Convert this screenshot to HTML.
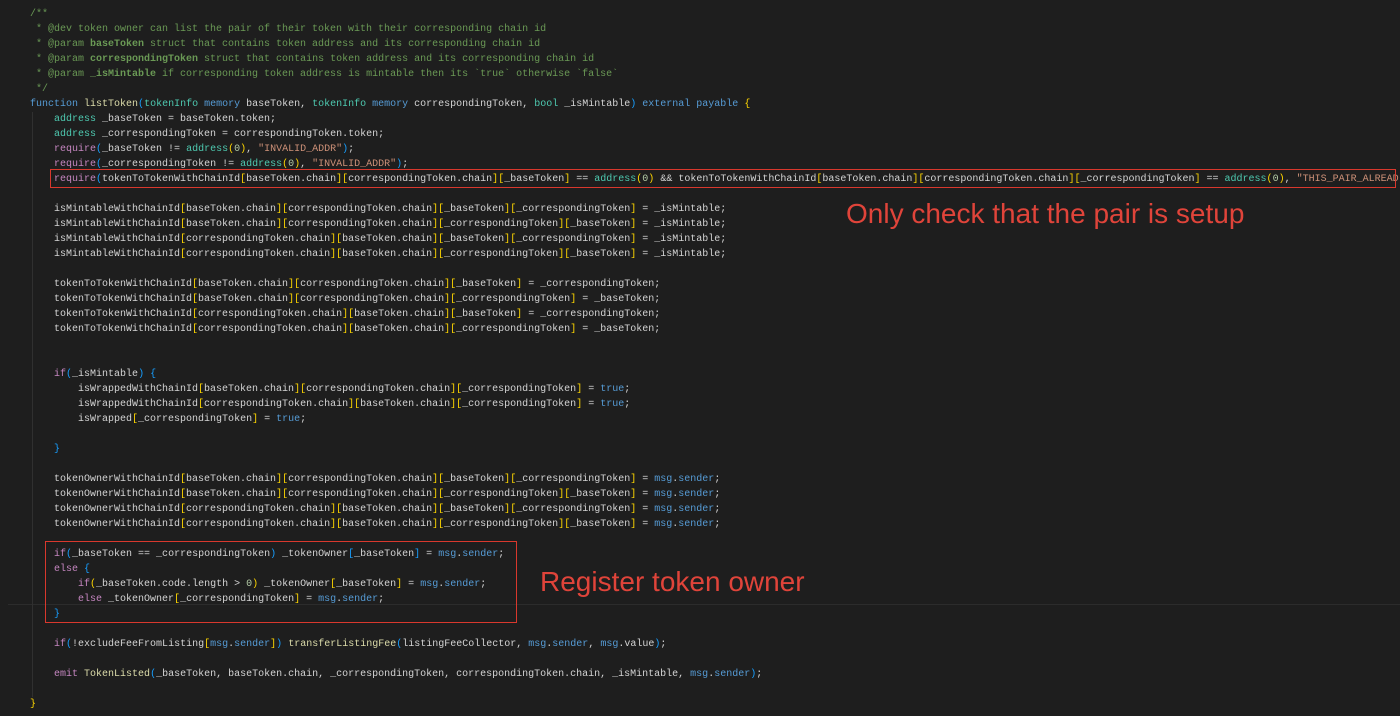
<!DOCTYPE html>
<html><head><meta charset="utf-8"><style>
html,body{margin:0;padding:0;background:#1e1e1e;width:1400px;height:716px;overflow:hidden;position:relative}
pre{position:absolute;left:30px;top:7px;margin:0;font:10px/15px "Liberation Mono",monospace;color:#d4d4d4;white-space:pre}
.c{color:#6a9955}.k{color:#569cd6}.f{color:#dcdcaa}.t{color:#4ec9b0}.s{color:#ce9178}.n{color:#b5cea8}.p{color:#c586c0}.v{color:#9cdcfe}.y{color:#ffd700}.m{color:#da70d6}.b{color:#179fff}
.box{position:absolute;border:1.5px solid #d9382d}
.ann{position:absolute;font-family:"Liberation Sans",sans-serif;color:#e0443a;font-size:28px;line-height:32px}
.hl{position:absolute;left:8px;right:0;top:604px;height:1px;background:#2c2c2c}
.g{position:absolute;width:1px;background:#303030}
</style></head><body>
<div class="hl"></div>
<div class="g" style="left:32px;top:112px;height:585px"></div>
<pre><span class="c">/**
 * @dev token owner can list the pair of their token with their corresponding chain id
 * @param <b>baseToken</b> struct that contains token address and its corresponding chain id
 * @param <b>correspondingToken</b> struct that contains token address and its corresponding chain id
 * @param <b>_isMintable</b> if corresponding token address is mintable then its `true` otherwise `false`
 */</span>
<span class="k">function</span> <span class="f">listToken</span><span class="b">(</span><span class="t">tokenInfo</span> <span class="k">memory</span> baseToken, <span class="t">tokenInfo</span> <span class="k">memory</span> correspondingToken, <span class="t">bool</span> _isMintable<span class="b">)</span> <span class="k">external</span> <span class="k">payable</span> <span class="y">{</span>
    <span class="t">address</span> _baseToken = baseToken.token;
    <span class="t">address</span> _correspondingToken = correspondingToken.token;
    <span class="p">require</span><span class="b">(</span>_baseToken != <span class="t">address</span><span class="y">(</span><span class="n">0</span><span class="y">)</span>, <span class="s">"INVALID_ADDR"</span><span class="b">)</span>;
    <span class="p">require</span><span class="b">(</span>_correspondingToken != <span class="t">address</span><span class="y">(</span><span class="n">0</span><span class="y">)</span>, <span class="s">"INVALID_ADDR"</span><span class="b">)</span>;
    <span class="p">require</span><span class="b">(</span>tokenToTokenWithChainId<span class="y">[</span>baseToken.chain<span class="y">]</span><span class="y">[</span>correspondingToken.chain<span class="y">]</span><span class="y">[</span>_baseToken<span class="y">]</span> == <span class="t">address</span><span class="y">(</span><span class="n">0</span><span class="y">)</span> &amp;&amp; tokenToTokenWithChainId<span class="y">[</span>baseToken.chain<span class="y">]</span><span class="y">[</span>correspondingToken.chain<span class="y">]</span><span class="y">[</span>_correspondingToken<span class="y">]</span> == <span class="t">address</span><span class="y">(</span><span class="n">0</span><span class="y">)</span>, <span class="s">"THIS_PAIR_ALREAD</span>

    isMintableWithChainId<span class="y">[</span>baseToken.chain<span class="y">]</span><span class="y">[</span>correspondingToken.chain<span class="y">]</span><span class="y">[</span>_baseToken<span class="y">]</span><span class="y">[</span>_correspondingToken<span class="y">]</span> = _isMintable;
    isMintableWithChainId<span class="y">[</span>baseToken.chain<span class="y">]</span><span class="y">[</span>correspondingToken.chain<span class="y">]</span><span class="y">[</span>_correspondingToken<span class="y">]</span><span class="y">[</span>_baseToken<span class="y">]</span> = _isMintable;
    isMintableWithChainId<span class="y">[</span>correspondingToken.chain<span class="y">]</span><span class="y">[</span>baseToken.chain<span class="y">]</span><span class="y">[</span>_baseToken<span class="y">]</span><span class="y">[</span>_correspondingToken<span class="y">]</span> = _isMintable;
    isMintableWithChainId<span class="y">[</span>correspondingToken.chain<span class="y">]</span><span class="y">[</span>baseToken.chain<span class="y">]</span><span class="y">[</span>_correspondingToken<span class="y">]</span><span class="y">[</span>_baseToken<span class="y">]</span> = _isMintable;

    tokenToTokenWithChainId<span class="y">[</span>baseToken.chain<span class="y">]</span><span class="y">[</span>correspondingToken.chain<span class="y">]</span><span class="y">[</span>_baseToken<span class="y">]</span> = _correspondingToken;
    tokenToTokenWithChainId<span class="y">[</span>baseToken.chain<span class="y">]</span><span class="y">[</span>correspondingToken.chain<span class="y">]</span><span class="y">[</span>_correspondingToken<span class="y">]</span> = _baseToken;
    tokenToTokenWithChainId<span class="y">[</span>correspondingToken.chain<span class="y">]</span><span class="y">[</span>baseToken.chain<span class="y">]</span><span class="y">[</span>_baseToken<span class="y">]</span> = _correspondingToken;
    tokenToTokenWithChainId<span class="y">[</span>correspondingToken.chain<span class="y">]</span><span class="y">[</span>baseToken.chain<span class="y">]</span><span class="y">[</span>_correspondingToken<span class="y">]</span> = _baseToken;


    <span class="p">if</span><span class="b">(</span>_isMintable<span class="b">)</span> <span class="b">{</span>
        isWrappedWithChainId<span class="y">[</span>baseToken.chain<span class="y">]</span><span class="y">[</span>correspondingToken.chain<span class="y">]</span><span class="y">[</span>_correspondingToken<span class="y">]</span> = <span class="k">true</span>;
        isWrappedWithChainId<span class="y">[</span>correspondingToken.chain<span class="y">]</span><span class="y">[</span>baseToken.chain<span class="y">]</span><span class="y">[</span>_correspondingToken<span class="y">]</span> = <span class="k">true</span>;
        isWrapped<span class="y">[</span>_correspondingToken<span class="y">]</span> = <span class="k">true</span>;

    <span class="b">}</span>

    tokenOwnerWithChainId<span class="y">[</span>baseToken.chain<span class="y">]</span><span class="y">[</span>correspondingToken.chain<span class="y">]</span><span class="y">[</span>_baseToken<span class="y">]</span><span class="y">[</span>_correspondingToken<span class="y">]</span> = <span class="k">msg</span>.<span class="k">sender</span>;
    tokenOwnerWithChainId<span class="y">[</span>baseToken.chain<span class="y">]</span><span class="y">[</span>correspondingToken.chain<span class="y">]</span><span class="y">[</span>_correspondingToken<span class="y">]</span><span class="y">[</span>_baseToken<span class="y">]</span> = <span class="k">msg</span>.<span class="k">sender</span>;
    tokenOwnerWithChainId<span class="y">[</span>correspondingToken.chain<span class="y">]</span><span class="y">[</span>baseToken.chain<span class="y">]</span><span class="y">[</span>_baseToken<span class="y">]</span><span class="y">[</span>_correspondingToken<span class="y">]</span> = <span class="k">msg</span>.<span class="k">sender</span>;
    tokenOwnerWithChainId<span class="y">[</span>correspondingToken.chain<span class="y">]</span><span class="y">[</span>baseToken.chain<span class="y">]</span><span class="y">[</span>_correspondingToken<span class="y">]</span><span class="y">[</span>_baseToken<span class="y">]</span> = <span class="k">msg</span>.<span class="k">sender</span>;

    <span class="p">if</span><span class="b">(</span>_baseToken == _correspondingToken<span class="b">)</span> _tokenOwner<span class="b">[</span>_baseToken<span class="b">]</span> = <span class="k">msg</span>.<span class="k">sender</span>;
    <span class="p">else</span> <span class="b">{</span>
        <span class="p">if</span><span class="y">(</span>_baseToken.code.length &gt; <span class="n">0</span><span class="y">)</span> _tokenOwner<span class="y">[</span>_baseToken<span class="y">]</span> = <span class="k">msg</span>.<span class="k">sender</span>;
        <span class="p">else</span> _tokenOwner<span class="y">[</span>_correspondingToken<span class="y">]</span> = <span class="k">msg</span>.<span class="k">sender</span>;
    <span class="b">}</span>

    <span class="p">if</span><span class="b">(</span>!excludeFeeFromListing<span class="y">[</span><span class="k">msg</span>.<span class="k">sender</span><span class="y">]</span><span class="b">)</span> <span class="f">transferListingFee</span><span class="b">(</span>listingFeeCollector, <span class="k">msg</span>.<span class="k">sender</span>, <span class="k">msg</span>.value<span class="b">)</span>;

    <span class="p">emit</span> <span class="f">TokenListed</span><span class="b">(</span>_baseToken, baseToken.chain, _correspondingToken, correspondingToken.chain, _isMintable, <span class="k">msg</span>.<span class="k">sender</span><span class="b">)</span>;

<span class="y">}</span></pre>
<div class="box" style="left:50px;top:169px;width:1344px;height:17px"></div>
<div class="box" style="left:45px;top:541px;width:470px;height:80px"></div>
<div class="ann" style="left:846px;top:198px">Only check that the pair is setup</div>
<div class="ann" style="left:540px;top:566px">Register token owner</div>
</body></html>
